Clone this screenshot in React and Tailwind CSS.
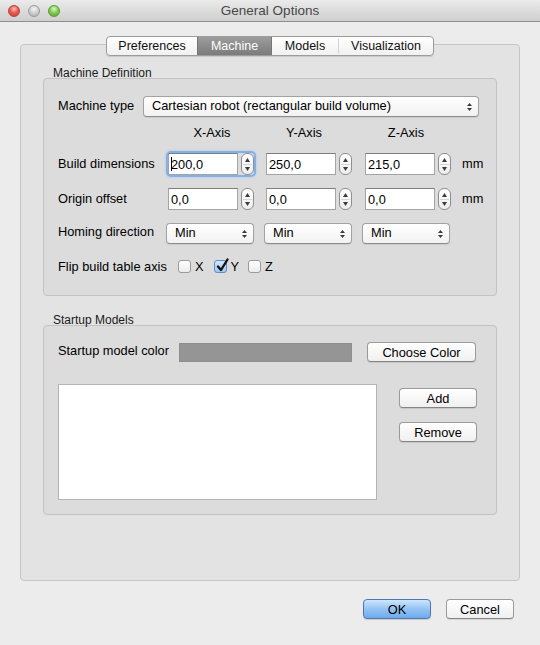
import React from "react";

const Light = ({ className }) => (
  <div className={"w-[12px] h-[12px] rounded-full border " + className} />
);

const UpDown = () => (
  <div className="flex flex-col items-center gap-[2px]">
    <svg width="5" height="3" viewBox="0 0 5 3"><path d="M2.5 0L5 3H0z" fill="#3a3a3a" /></svg>
    <svg width="5" height="3" viewBox="0 0 5 3"><path d="M0 0H5L2.5 3z" fill="#3a3a3a" /></svg>
  </div>
);

const Combo = ({ className, children }) => (
  <div
    className={
      "h-[21px] rounded-[4px] border border-[#a2a2a2] border-b-[#8c8c8c] bg-gradient-to-b from-white to-[#f2f2f2] shadow-[0_1px_1px_rgba(0,0,0,0.08)] flex items-center pl-[8px] pr-[6px] " +
      className
    }
  >
    <span className="flex-1 pb-[2px] leading-[15px]">{children}</span>
    <UpDown />
  </div>
);

const Spinner = () => (
  <div className="w-[13px] h-[22px] rounded-[6px] border border-[#8e8e8e] bg-gradient-to-b from-white to-[#eeeeee] flex flex-col items-center justify-center gap-[2px]">
    <svg width="5" height="4" viewBox="0 0 5 4"><path d="M2.5 0L5 4H0z" fill="#3a3a3a" /></svg>
    <div className="w-[9px] h-px bg-[#d6d6d6]" />
    <svg width="5" height="4" viewBox="0 0 5 4"><path d="M0 0H5L2.5 4z" fill="#3a3a3a" /></svg>
  </div>
);

const Field = ({ value, caret }) => (
  <div className="w-[70px] h-[22px] bg-white border border-[#a4a4a4] border-t-[#7e7e7e] flex items-center pl-[2px] leading-[15px]">
    {caret && <span className="w-px h-[14px] bg-black -mr-px" />}
    <span>{value}</span>
  </div>
);

const SpinBox = ({ value, caret, focus, className = "" }) => (
  <div
    className={
      "flex items-center gap-[3px] " +
      (focus ? "rounded-[3px] shadow-[0_0_0_2px_#86b0e4,0_0_2px_3px_#b8d2f0] " : "") +
      className
    }
  >
    <Field value={value} caret={caret} />
    <Spinner />
  </div>
);

const Btn = ({ className = "", children }) => (
  <div
    className={
      "h-[20px] rounded-[4px] border border-[#9b9b9b] border-b-[#848484] bg-gradient-to-b from-white to-[#f0f0f0] shadow-[0_1px_1px_rgba(0,0,0,0.1)] flex items-center justify-center leading-[15px] " +
      className
    }
  >
    {children}
  </div>
);

const Check = ({ checked }) =>
  checked ? (
    <div className="relative w-[13px] h-[13px] rounded-[3px] border border-[#5b8fd0] bg-gradient-to-b from-[#d4e6fa] to-[#9fc6f0]">
      <svg className="absolute -top-[3px] left-[1px]" width="14" height="15" viewBox="0 0 14 15">
        <path d="M2 8.5L5 12L11.5 1.5" fill="none" stroke="#111" strokeWidth="2.3" strokeLinecap="round" strokeLinejoin="round" />
      </svg>
    </div>
  ) : (
    <div className="w-[13px] h-[13px] rounded-[3px] border border-[#9a9a9a] bg-gradient-to-b from-white to-[#ececec]" />
  );

export default function App() {
  return (
    <div className="w-[540px] h-[645px] overflow-hidden bg-[#ececec] font-['Liberation_Sans',Arial,sans-serif] text-[12.8px] text-black flex flex-col">
      {/* Title bar */}
      <div className="h-[22px] shrink-0 flex items-center bg-gradient-to-b from-[#ebebeb] to-[#cecece] border-b border-[#8f8f8f]">
        <div className="w-[60px] flex items-center gap-[8px] pl-[8px]">
          <Light className="border-[#b0453c] bg-[radial-gradient(circle_at_50%_30%,#ffc2b8_0%,#ee5b4f_45%,#c23a30_100%)]" />
          <Light className="border-[#9b9b9b] bg-[radial-gradient(circle_at_50%_30%,#f4f4f4_0%,#cfcfcf_50%,#a9a9a9_100%)]" />
          <Light className="border-[#5c9a3a] bg-[radial-gradient(circle_at_50%_30%,#e0f7c4_0%,#86cf55_45%,#4f9c2a_100%)]" />
        </div>
        <div className="flex-1 text-center text-[13.5px] text-[#474747] leading-[16px]">General Options</div>
        <div className="w-[60px]" />
      </div>

      {/* Tabs */}
      <div className="pt-[14px] flex justify-center relative z-10 -mb-[12px]">
        <div className="flex h-[20px] rounded-[4px] border border-[#9c9c9c] bg-gradient-to-b from-white to-[#f1f1f1] overflow-hidden shadow-[0_1px_1px_rgba(0,0,0,0.12)] text-[12.5px] text-[#111]">
          <div className="w-[90px] flex items-center justify-center">Preferences</div>
          <div className="w-[75px] flex items-center justify-center bg-gradient-to-b from-[#9d9d9d] to-[#7b7b7b] text-white border-x border-[#767676]">
            Machine
          </div>
          <div className="w-[66px] flex items-center justify-center">Models</div>
          <div className="w-px h-[14px] self-center bg-[#d2d2d2]" />
          <div className="w-[94px] flex items-center justify-center">Visualization</div>
        </div>
      </div>

      {/* Pane */}
      <div className="mx-[20px] h-[537px] shrink-0 rounded-[4px] border border-[#c6c6c6] bg-[#e3e3e3] pt-[22px] px-[22px]">
        {/* Machine Definition */}
        <div className="h-[12px] leading-[12px] text-[12px] pl-[10px] text-[#1a1a1a] -mb-px relative">Machine Definition</div>
        <div className="h-[218px] rounded-[4px] border border-[#c3c3c3] bg-[#dcdcdc] pl-[14px] pt-[17px]">
          <div className="flex items-center">
            <div className="w-[85px] pb-[2px]">Machine type</div>
            <Combo className="w-[336px]">Cartesian robot (rectangular build volume)</Combo>
          </div>

          <div className="mt-[7px] h-[16px] flex items-center">
            <div className="ml-[124px] w-[60px] text-center">X-Axis</div>
            <div className="ml-[32px] w-[60px] text-center">Y-Axis</div>
            <div className="ml-[42px] w-[60px] text-center">Z-Axis</div>
          </div>

          <div className="mt-[13px] h-[22px] flex items-center">
            <div className="w-[110px] pb-[2px]">Build dimensions</div>
            <SpinBox value="200,0" caret focus />
            <SpinBox value="250,0" className="ml-[12px]" />
            <SpinBox value="215,0" className="ml-[13px]" />
            <div className="ml-[11px] pb-[2px]">mm</div>
          </div>

          <div className="mt-[13px] h-[22px] flex items-center">
            <div className="w-[110px] pb-[2px]">Origin offset</div>
            <SpinBox value="0,0" />
            <SpinBox value="0,0" className="ml-[12px]" />
            <SpinBox value="0,0" className="ml-[13px]" />
            <div className="ml-[11px] pb-[2px]">mm</div>
          </div>

          <div className="mt-[13px] h-[21px] flex items-center">
            <div className="w-[108px] pb-[4px]">Homing direction</div>
            <Combo className="w-[88px]">Min</Combo>
            <Combo className="w-[88px] ml-[10px]">Min</Combo>
            <Combo className="w-[88px] ml-[10px]">Min</Combo>
          </div>

          <div className="mt-[16px] h-[13px] flex items-center">
            <div className="w-[120px] pb-[1px]">Flip build table axis</div>
            <Check />
            <div className="ml-[4px]">X</div>
            <div className="ml-[10px]"><Check checked /></div>
            <div className="ml-[4px]">Y</div>
            <div className="ml-[9px]"><Check /></div>
            <div className="ml-[4px]">Z</div>
          </div>
        </div>

        {/* Startup Models */}
        <div className="mt-[18px] h-[12px] leading-[12px] text-[12px] pl-[10px] text-[#1a1a1a] -mb-px relative">Startup Models</div>
        <div className="h-[190px] rounded-[4px] border border-[#c3c3c3] bg-[#dcdcdc] pl-[14px] pt-[16px]">
          <div className="h-[20px] flex items-center">
            <div className="w-[121px] pb-[2px]">Startup model color</div>
            <div className="w-[173px] h-[19px] bg-[#959595] border border-[#8e8e8e]" />
            <Btn className="ml-[15px] w-[109px]">Choose Color</Btn>
          </div>
          <div className="mt-[22px] flex items-start">
            <div className="w-[319px] h-[116px] bg-white border border-[#b4b4b4]" />
            <div className="ml-[22px] pt-[4px] flex flex-col gap-[14px]">
              <Btn className="w-[78px]">Add</Btn>
              <Btn className="w-[78px]">Remove</Btn>
            </div>
          </div>
        </div>
      </div>

      {/* Bottom buttons */}
      <div className="mt-[18px] flex justify-end gap-[15px] pr-[26px]">
        <div className="w-[68px] h-[20px] rounded-[4px] border border-[#4f78b2] bg-gradient-to-b from-[#cfe6fc] via-[#93c3f3] to-[#6fabee] shadow-[0_1px_1px_rgba(0,0,0,0.15)] flex items-center justify-center leading-[15px]">
          OK
        </div>
        <Btn className="w-[68px]">Cancel</Btn>
      </div>
    </div>
  );
}
